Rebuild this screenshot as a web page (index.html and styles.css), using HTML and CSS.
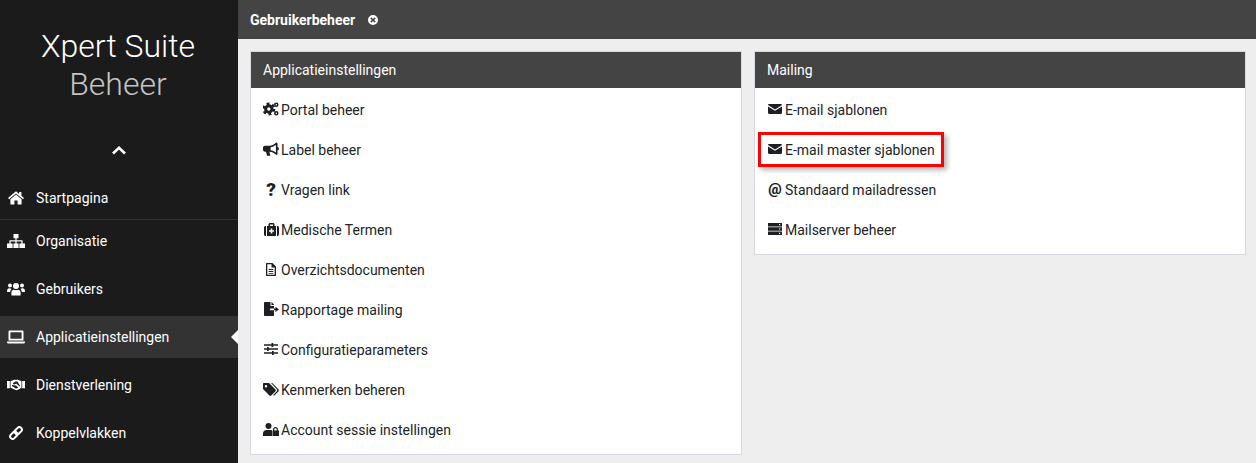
FILE: index.html
```html
<!DOCTYPE html>
<html lang="nl">
<head>
    <meta charset="UTF-8">
    <title>Gebruikerbeheer</title>
    <link rel="stylesheet" href="styles.css">
</head>
<body>

<svg class="sprite" width="0" height="0">
    <symbol id="i-home" viewBox="0 0 16 14"><path d="M8 0.2 L0 7 L1 8.2 L8 2.4 L15 8.2 L16 7 L13.4 4.8 V1 H11.2 V3 Z M8 3.6 L2.4 8.2 V13.6 H6.4 V9.6 H9.6 V13.6 H13.6 V8.2 Z"/></symbol>
    <symbol id="i-sitemap" viewBox="0 0 18 14"><path d="M6.500 0 H11.500 V4.200 H9.600 V6.200 H15.600 V9.600 H18 V14 H12.400 V9.600 H14.400 V7.400 H9.600 V9.600 H11.600 V14 H6.400 V9.600 H8.400 V7.400 H3.600 V9.600 H5.600 V14 H0 V9.600 H2.400 V6.200 H8.400 V4.200 H6.500 Z"/></symbol>
    <symbol id="i-users" viewBox="0 0 18 13"><circle cx="9" cy="3.600" r="3"/><circle cx="3" cy="3" r="2"/><circle cx="15" cy="3" r="2"/><path d="M4.400 13 V10 C4.400 8 6 7.200 7 7.200 C8 7.800 10 7.800 11 7.200 C12 7.200 13.600 8 13.600 10 V13 Z M0 9 C0 6.600 1 5.800 2.200 5.800 C3 5.800 4 6 4.600 6.400 C3.600 7.200 3.200 8.200 3.200 9.600 H1 C0.400 9.600 0 9.400 0 9 Z M18 9 C18 6.600 17 5.800 15.800 5.800 C15 5.800 14 6 13.400 6.400 C14.400 7.200 14.800 8.200 14.800 9.600 H17 C17.600 9.600 18 9.400 18 9 Z"/></symbol>
    <symbol id="i-laptop" viewBox="0 0 18 13"><path fill-rule="evenodd" d="M2.500 0 H15.500 C16 0 16.500 0.500 16.500 1 V10 H1.500 V1 C1.500 0.500 2 0 2.500 0 Z M3.400 1.800 V8.200 H14.600 V1.800 Z M0 11 H18 V11.800 C18 12.400 17.500 13 17 13 H1 C0.500 13 0 12.400 0 11.800 Z"/></symbol>
    <symbol id="i-handshake" viewBox="0 0 18 11"><path d="M0 1.500 H2.800 V8.800 H0 Z M15.200 1.500 H18 V8.800 H15.200 Z"/><path fill-rule="evenodd" d="M3.500 1.800 L7 0.300 H11 L14.500 1.800 V8.300 L12 9.800 L9.500 10.800 L7 9.800 L3.500 8.300 Z M8.600 2 L6.200 3.500 C5.600 4.200 6.400 5.200 7.400 4.900 L9.200 4 L12.600 7 L13 6.300 L10.400 2 Z M5 5.600 L5 6.600 L8.800 9 L10.400 8.800 L11 7.800 L9 6 Z"/></symbol>
    <symbol id="i-link" viewBox="0 0 14 14"><g fill="none" stroke="currentColor" stroke-width="2"><rect x="0.700" y="6.800" width="8" height="5" rx="2.500" transform="rotate(-45 4.700 9.300)"/><rect x="5.300" y="2.200" width="8" height="5" rx="2.500" transform="rotate(-45 9.300 4.700)"/></g></symbol>
    <symbol id="i-cogs" viewBox="0 0 16 14"><g fill="none" stroke="currentColor"><circle cx="5.800" cy="7" r="3.200" stroke-width="3"/><circle cx="5.800" cy="7" r="5.300" stroke-width="2.400" stroke-dasharray="2.800 2.750"/><circle cx="13.300" cy="2.700" r="1.500" stroke-width="1.500"/><circle cx="13.300" cy="11.300" r="1.500" stroke-width="1.500"/></g></symbol>
    <symbol id="i-bullhorn" viewBox="0 0 16 14"><path d="M13.200 0.400 C14 0.400 14.500 1 14.500 1.600 V5 C15.400 5.300 16 6 16 6.800 C16 7.600 15.400 8.300 14.500 8.600 V11.800 C14.500 12.400 14 13 13.200 13 C10.800 10.600 8.800 9.800 6.400 9.700 L7.400 13.800 H4 L3 9.700 H2 C0.800 9.700 0 8.800 0 7.800 V5.600 C0 4.500 0.900 3.700 2 3.700 H6.600 C8.800 3.600 10.800 2.800 13.200 0.400 Z M12.900 3 C11.300 4.300 9.500 5 7.600 5.300 V8.200 C9.500 8.500 11.300 9.200 12.900 10.400 Z" fill-rule="evenodd"/></symbol>
    <symbol id="i-medkit" viewBox="0 0 15 13"><path fill-rule="evenodd" d="M4.500 3 V1.500 C4.500 0.700 5.200 0 6 0 H9 C9.800 0 10.500 0.700 10.500 1.500 V3 H12 V13 H3 V3 Z M6 1.500 V3 H9 V1.500 Z M6.700 5.500 V7.200 H5 V8.800 H6.700 V10.500 H8.300 V8.800 H10 V7.200 H8.300 V5.500 Z M0 4.500 C0 3.700 0.700 3 1.500 3 H2 V13 H1.500 C0.700 13 0 12.300 0 11.500 Z M13 3 H13.500 C14.300 3 15 3.700 15 4.500 V11.500 C15 12.300 14.300 13 13.500 13 H13 Z"/></symbol>
    <symbol id="i-file" viewBox="0 0 10 13"><path fill-rule="evenodd" d="M1 0 H6.500 L10 3.500 V12 C10 12.600 9.600 13 9 13 H1 C0.400 13 0 12.600 0 12 V1 C0 0.400 0.400 0 1 0 Z M1.300 1.300 V11.700 H8.700 V4.500 H5.500 V1.300 Z M2.700 6 H7.300 V7 H2.700 Z M2.700 8 H7.300 V9 H2.700 Z M2.700 10 H7.300 V10.800 H2.700 Z"/></symbol>
    <symbol id="i-file-export" viewBox="0 0 15 14"><path d="M1 0 H6.500 V4 H10 V6.500 H6 V8.200 H10 V13 C10 13.600 9.600 14 9 14 H1 C0.400 14 0 13.600 0 13 V1 C0 0.400 0.400 0 1 0 Z M7.500 0 L10 2.600 V3 H7.500 Z M11.500 4.800 L15 7.400 L11.500 10 V8.200 H10 V6.500 H11.500 Z"/></symbol>
    <symbol id="i-sliders" viewBox="0 0 14 12"><path d="M0 1.300 H7.500 V0 H9.200 V1.300 H14 V2.700 H9.200 V4 H7.500 V2.700 H0 Z M0 5.300 H3 V4 H4.700 V5.300 H14 V6.700 H4.700 V8 H3 V6.700 H0 Z M0 9.300 H8 V8 H9.700 V9.300 H14 V10.700 H9.700 V12 H8 V10.700 H0 Z"/></symbol>
    <symbol id="i-tags" viewBox="0 0 16 13"><path fill-rule="evenodd" d="M0 1 C0 0.400 0.400 0 1 0 H6 L12.500 6.500 C13 7 13 7.700 12.500 8.200 L8.200 12.500 C7.700 13 7 13 6.500 12.500 L0 6 Z M3 2 A1.200 1.200 0 1 0 3 4.400 A1.200 1.200 0 1 0 3 2 Z"/><path d="M8 0 H9.200 L15.600 6.500 C16 7 16 7.700 15.600 8.200 L11 12.800 L10.200 12 L14 8 C14.400 7.600 14.400 7 14 6.500 Z"/></symbol>
    <symbol id="i-user-lock" viewBox="0 0 16 13"><circle cx="5.500" cy="3" r="3"/><path d="M0 13 V10.500 C0 8.500 1.500 7 3.500 7 H7.500 C8.400 7 8.800 7.300 9 7.500 V13 Z"/><path fill-rule="evenodd" d="M10 7.500 V6.500 C10 5 11 4 12.500 4 C14 4 15 5 15 6.500 V7.500 H16 V13 H9.500 V7.500 Z M11.300 7.500 H13.700 V6.500 C13.700 5.800 13.200 5.300 12.500 5.300 C11.800 5.300 11.300 5.800 11.300 6.500 Z"/></symbol>
    <symbol id="i-envelope" viewBox="0 0 14 10"><path d="M1.200 0 H12.800 C13.500 0 14 0.500 14 1 L7 5.400 L0 1 C0 0.500 0.500 0 1.200 0 Z M0 2.400 L7 6.800 L14 2.400 V8.800 C14 9.500 13.500 10 12.800 10 H1.200 C0.500 10 0 9.500 0 8.800 Z"/></symbol>
    <symbol id="i-server" viewBox="0 0 14 12"><path fill-rule="evenodd" d="M0 0 H14 V3.400 H0 Z M11 1.100 V2.300 H12.200 V1.100 Z M0 4.300 H14 V7.700 H0 Z M11 5.400 V6.600 H12.200 V5.400 Z M0 8.600 H14 V12 H0 Z M11 9.700 V10.900 H12.200 V9.700 Z"/></symbol>
</svg>

<div class="layout">
    <aside class="sidebar">
        <div class="brand">
            <div class="brand-name">Xpert Suite</div>
            <div class="brand-sub">Beheer</div>
        </div>
        <div class="collapse">
            <svg width="14" height="9" viewBox="0 0 14 9"><path d="M1 7.500 L7 1.800 L13 7.500" fill="none" stroke="currentColor" stroke-width="2.600"/></svg>
        </div>
        <nav class="nav">
            <a class="nav-item nav-home"><svg class="nav-icon"><use href="#i-home"/></svg>Startpagina</a>
            <a class="nav-item nav-org"><svg class="nav-icon"><use href="#i-sitemap"/></svg>Organisatie</a>
            <a class="nav-item"><svg class="nav-icon"><use href="#i-users"/></svg>Gebruikers</a>
            <a class="nav-item active"><svg class="nav-icon"><use href="#i-laptop"/></svg>Applicatieinstellingen</a>
            <a class="nav-item"><svg class="nav-icon"><use href="#i-handshake"/></svg>Dienstverlening</a>
            <a class="nav-item"><svg class="nav-icon"><use href="#i-link"/></svg>Koppelvlakken</a>
        </nav>
    </aside>

    <div class="main">
        <header class="topbar">
            <span class="tab-title">Gebruikerbeheer</span>
            <svg class="tab-close" viewBox="0 0 10 10"><path fill-rule="evenodd" d="M5 0 A5 5 0 1 1 5 10 A5 5 0 1 1 5 0 Z M3.400 2.300 L2.300 3.400 L3.900 5 L2.300 6.600 L3.400 7.700 L5 6.100 L6.600 7.700 L7.700 6.600 L6.100 5 L7.700 3.400 L6.600 2.300 L5 3.900 Z"/></svg>
        </header>

        <div class="content">
            <section class="panel">
                <h3 class="panel-title">Applicatieinstellingen</h3>
                <ul class="panel-list">
                    <li><span class="row-icon"><svg class="ic-cogs"><use href="#i-cogs"/></svg></span>Portal beheer</li>
                    <li><span class="row-icon"><svg class="ic-bullhorn"><use href="#i-bullhorn"/></svg></span>Label beheer</li>
                    <li><span class="row-icon glyph-q">?</span>Vragen link</li>
                    <li><span class="row-icon"><svg class="ic-medkit"><use href="#i-medkit"/></svg></span>Medische Termen</li>
                    <li><span class="row-icon"><svg class="ic-file"><use href="#i-file"/></svg></span>Overzichtsdocumenten</li>
                    <li><span class="row-icon"><svg class="ic-export"><use href="#i-file-export"/></svg></span>Rapportage mailing</li>
                    <li><span class="row-icon"><svg class="ic-sliders"><use href="#i-sliders"/></svg></span>Configuratieparameters</li>
                    <li><span class="row-icon"><svg class="ic-tags"><use href="#i-tags"/></svg></span>Kenmerken beheren</li>
                    <li><span class="row-icon"><svg class="ic-user-lock"><use href="#i-user-lock"/></svg></span>Account sessie instellingen</li>
                </ul>
            </section>

            <section class="panel">
                <h3 class="panel-title">Mailing</h3>
                <ul class="panel-list">
                    <li><span class="row-icon"><svg class="ic-envelope"><use href="#i-envelope"/></svg></span>E-mail sjablonen</li>
                    <li class="marked"><span class="row-icon"><svg class="ic-envelope"><use href="#i-envelope"/></svg></span>E-mail master sjablonen<span class="highlight"></span></li>
                    <li><span class="row-icon glyph-at">@</span>Standaard mailadressen</li>
                    <li><span class="row-icon"><svg class="ic-server"><use href="#i-server"/></svg></span>Mailserver beheer</li>
                </ul>
            </section>
        </div>
    </div>
</div>

</body>
</html>
```

FILE: styles.css
```css
html, body {
    margin: 0;
    height: 100%;
    overflow: hidden;
}
body {
    font-family: Roboto, "Liberation Sans", sans-serif;
    font-size: 14px;
    color: #212529;
    background-color: #eeeeee;
}
.sprite {
    position: absolute;
}
.layout {
    display: flex;
    height: 463px;
}

/* Sidebar */
.sidebar {
    width: 238px;
    flex-shrink: 0;
    background-color: #1b1b1b;
    color: #ffffff;
}
.brand {
    padding: 27px 2px 0 0;
    text-align: center;
    font-size: 32px;
    font-weight: 300;
    line-height: 38px;
}
.brand-sub {
    color: #c4c4c4;
}
.collapse {
    display: flex;
    justify-content: center;
    align-items: center;
    margin-top: 36px;
    height: 22px;
}
.nav {
    margin-top: 16px;
}
.nav-item {
    display: flex;
    align-items: center;
    height: 48px;
    padding-left: 7px;
    color: #ffffff;
    position: relative;
}
.nav-home {
    height: 42px;
    border-bottom: 1px solid #333333;
}
.nav-org {
    height: 42px;
    margin-bottom: 3px;
}
.nav-item.active {
    height: 42px;
    margin: 3px 0;
    background-color: #333333;
}
.nav-item.active::after {
    content: "";
    position: absolute;
    right: 0;
    top: 50%;
    margin-top: -7px;
    border-top: 7px solid transparent;
    border-bottom: 7px solid transparent;
    border-right: 7px solid #ffffff;
}
.nav-icon {
    width: 18px;
    height: 14px;
    margin-right: 11px;
    fill: currentColor;
}

/* Main */
.main {
    flex: 1;
    min-width: 0;
}
.topbar {
    display: flex;
    align-items: center;
    height: 39px;
    padding-left: 12px;
    background-color: #444444;
    color: #ffffff;
}
.tab-title {
    font-weight: 700;
    font-size: 14px;
}
.tab-close {
    width: 10px;
    height: 10px;
    margin-left: 13px;
    fill: #ffffff;
}
.content {
    display: grid;
    grid-template-columns: 492px 492px;
    gap: 12px;
    align-items: start;
    padding: 12px;
}

/* Panels */
.panel {
    background-color: #ffffff;
    border: 1px solid #d6d8e2;
    padding-bottom: 4px;
}
.panel-title {
    margin: 0;
    height: 36px;
    line-height: 36px;
    padding-left: 12px;
    background-color: #444444;
    color: #ffffff;
    font-size: 14px;
    font-weight: 400;
}
.panel-list {
    list-style: none;
    margin: 0;
    padding: 2px 0 0 0;
}
.panel-list li {
    display: flex;
    align-items: center;
    height: 40px;
    padding-left: 12px;
    position: relative;
}
.row-icon {
    display: flex;
    align-items: center;
    justify-content: center;
    width: 16px;
    height: 16px;
    margin: -2px 2px 0 0;
    color: #1d1f22;
    fill: currentColor;
}
.glyph-q {
    font-weight: 900;
    font-size: 19px;
}
.glyph-at {
    font-weight: 900;
    font-size: 15px;
}
.ic-cogs { width: 16px; height: 14px; }
.ic-bullhorn { width: 16px; height: 14px; }
.ic-medkit { width: 15px; height: 13px; }
.ic-file { width: 10px; height: 13px; }
.ic-export { width: 15px; height: 14px; }
.ic-sliders { width: 14px; height: 12px; }
.ic-tags { width: 16px; height: 13px; }
.ic-user-lock { width: 16px; height: 13px; }
.ic-envelope { width: 14px; height: 10px; }
.ic-server { width: 14px; height: 12px; }

/* Red marker drawn over the screenshot */
.highlight {
    position: absolute;
    left: 3px;
    top: 2px;
    width: 180px;
    height: 29px;
    border: 3px solid #ff0000;
    box-shadow: 3px 3px 5px rgba(0, 0, 0, 0.3);
}
```
